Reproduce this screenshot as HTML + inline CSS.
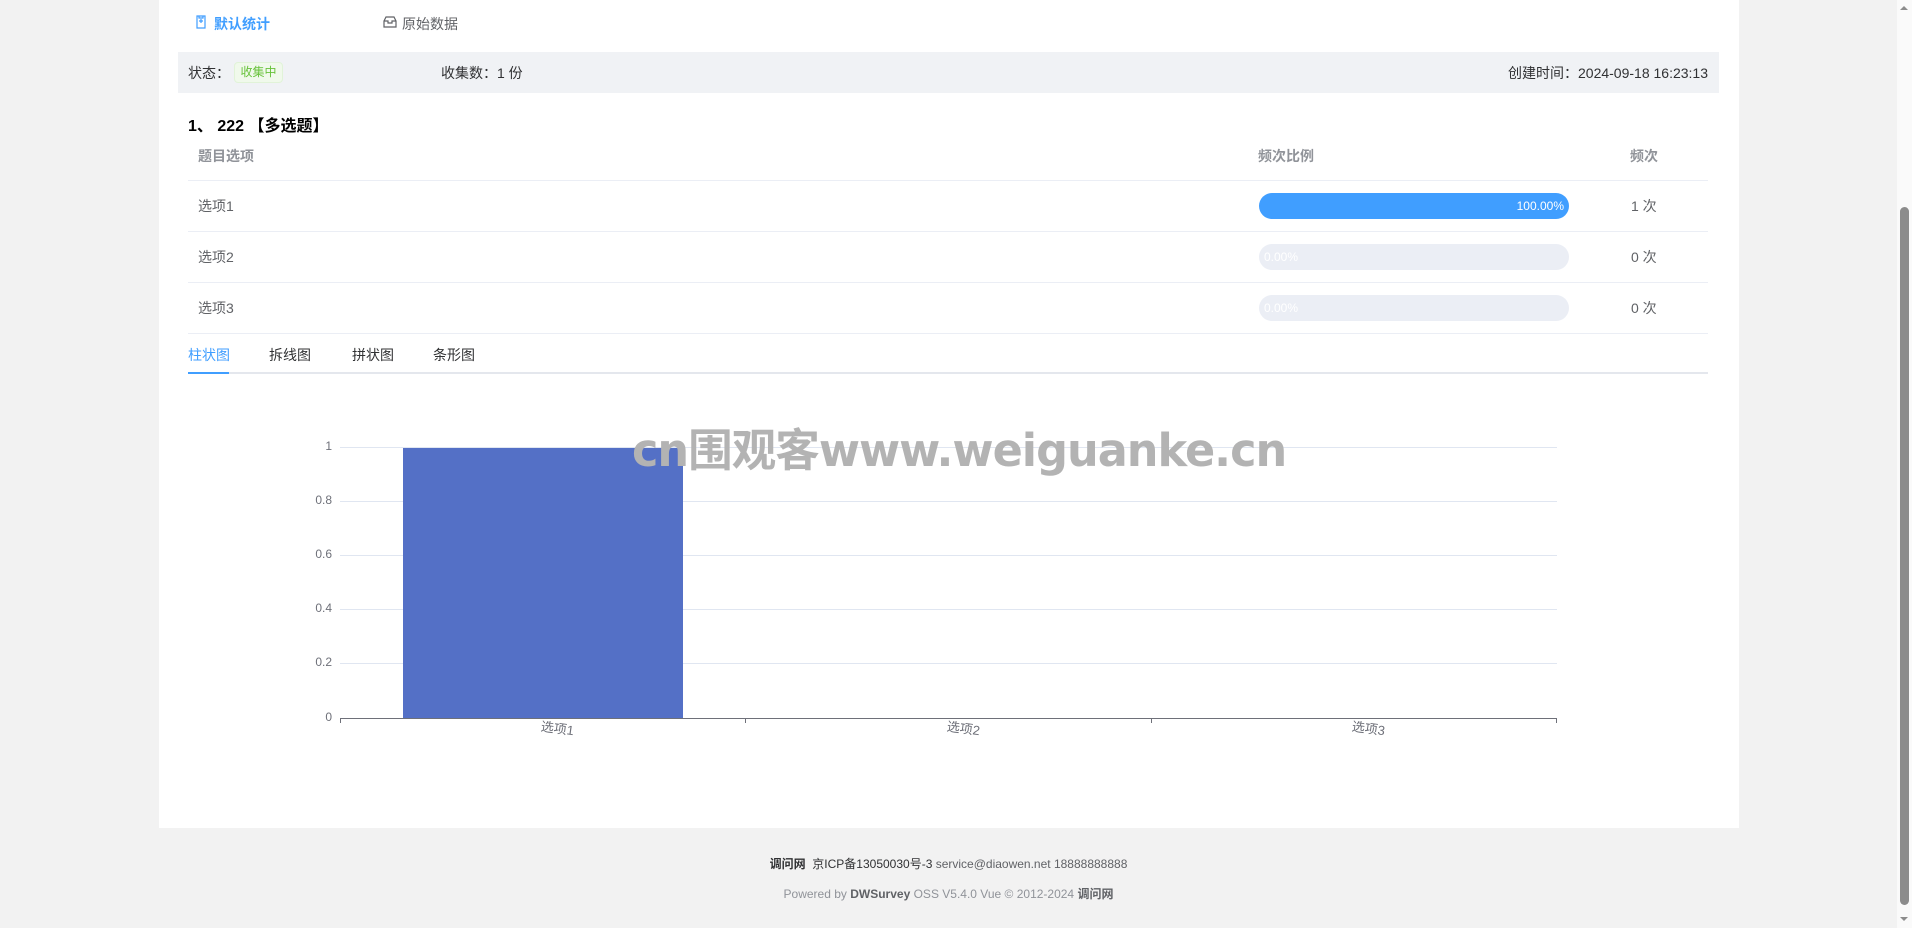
<!DOCTYPE html>
<html><head><meta charset="utf-8"><style>
*{margin:0;padding:0;box-sizing:border-box}
body{width:1912px;height:928px;overflow:hidden;background:#f2f2f2;font-family:"Liberation Sans","Noto Sans CJK SC",sans-serif;font-size:14px;color:#303133;position:relative}
.a{position:absolute;white-space:nowrap}
.card{position:absolute;left:159px;top:0;width:1580px;height:828px;background:#fff}
.line{position:absolute;left:188px;width:1520px;height:1px;background:#ebeef5}
.bar{position:absolute;left:1259px;width:310px;height:26px;border-radius:13px;background:#ebeef5;font-size:12px;color:#fff;line-height:26px}
.grid{position:absolute;left:340px;width:1217px;height:1px;background:#e0e6f1}
.yl{position:absolute;width:30px;left:302px;text-align:right;font-size:12px;color:#6e7079}
.xl{position:absolute;font-size:13px;color:#6e7079;transform:rotate(8deg)}
</style></head><body>
<div class="card"></div>
<svg class="a" style="left:195px;top:15px" width="12" height="14" viewBox="0 0 12 14"><path d="M2 1h8v12H2z M4 1v2h4V1 M4 6h4 M6 4v4" fill="none" stroke="#409eff" stroke-width="1.2"/></svg>
<div class="a" style="left:214px;top:14px;color:#409eff;font-weight:bold;font-size:14px">默认统计</div>
<svg class="a" style="left:383px;top:16px" width="14" height="12" viewBox="0 0 14 12"><path d="M1 5l2-4h8l2 4v6H1z M1 5h4v2h4V5h4" fill="none" stroke="#606266" stroke-width="1.2"/></svg>
<div class="a" style="left:402px;top:14px;color:#606266">原始数据</div>
<div class="a" style="left:178px;top:52px;width:1541px;height:41px;background:#f0f2f5"></div>
<div class="a" style="left:188px;top:63px">状态：</div>
<div class="a" style="left:234px;top:62px;width:49px;height:21px;background:#f0f9eb;border:1px solid #e1f3d8;border-radius:4px;color:#67c23a;font-size:12px;line-height:19px;text-align:center">收集中</div>
<div class="a" style="left:441px;top:63px">收集数：1 份</div>
<div class="a" style="right:204px;top:63px">创建时间：2024-09-18 16:23:13</div>
<div class="a" style="left:188px;top:112px;font-weight:bold;font-size:16px;color:#000">1、 222 【多选题】</div>
<div class="a" style="left:198px;top:146px;color:#909399;font-weight:bold;font-size:14px">题目选项</div>
<div class="a" style="left:1258px;top:146px;color:#909399;font-weight:bold">频次比例</div>
<div class="a" style="left:1630px;top:146px;color:#909399;font-weight:bold">频次</div>
<div class="line" style="top:180px"></div>
<div class="line" style="top:231px"></div>
<div class="line" style="top:282px"></div>
<div class="line" style="top:333px"></div>
<div class="a" style="left:198px;top:196px;color:#606266">选项1</div>
<div class="a" style="left:198px;top:247px;color:#606266">选项2</div>
<div class="a" style="left:198px;top:298px;color:#606266">选项3</div>
<div class="bar" style="top:193px;background:#409eff;text-align:right;padding-right:5px">100.00%</div>
<div class="bar" style="top:244px;padding-left:5px">0.00%</div>
<div class="bar" style="top:295px;padding-left:5px">0.00%</div>
<div class="a" style="left:1631px;top:196px;color:#606266">1 次</div>
<div class="a" style="left:1631px;top:247px;color:#606266">0 次</div>
<div class="a" style="left:1631px;top:298px;color:#606266">0 次</div>
<div class="a" style="left:188px;top:372px;width:1520px;height:2px;background:#e4e7ed"></div>
<div class="a" style="left:188px;top:372px;width:41px;height:2px;background:#409eff"></div>
<div class="a" style="left:188px;top:345px;color:#409eff">柱状图</div>
<div class="a" style="left:269px;top:345px">拆线图</div>
<div class="a" style="left:352px;top:345px">拼状图</div>
<div class="a" style="left:433px;top:345px">条形图</div>
<div class="grid" style="top:447px"></div>
<div class="grid" style="top:501px"></div>
<div class="grid" style="top:555px"></div>
<div class="grid" style="top:609px"></div>
<div class="grid" style="top:663px"></div>
<div class="yl" style="top:439px">1</div>
<div class="yl" style="top:493px">0.8</div>
<div class="yl" style="top:547px">0.6</div>
<div class="yl" style="top:601px">0.4</div>
<div class="yl" style="top:655px">0.2</div>
<div class="yl" style="top:710px">0</div>
<div class="a" style="left:403px;top:448px;width:280px;height:270px;background:#5470c6"></div>
<div class="a" style="left:340px;top:718px;width:1217px;height:1px;background:#6e7079"></div>
<div class="a" style="left:340px;top:718px;width:1px;height:5px;background:#6e7079"></div>
<div class="a" style="left:745px;top:718px;width:1px;height:5px;background:#6e7079"></div>
<div class="a" style="left:1151px;top:718px;width:1px;height:5px;background:#6e7079"></div>
<div class="a" style="left:1556px;top:718px;width:1px;height:5px;background:#6e7079"></div>
<div class="xl" style="left:541px;top:718px">选项1</div>
<div class="xl" style="left:947px;top:718px">选项2</div>
<div class="xl" style="left:1352px;top:718px">选项3</div>
<div class="a" style="left:632px;top:414px;font-size:45px;font-weight:bold;color:#b3b3b3;letter-spacing:-1px;font-family:'DejaVu Sans','Noto Sans CJK SC',sans-serif;transform:scaleX(0.99);transform-origin:left">cn围观客www.weiguanke.cn</div>
<div class="a" style="left:0;width:1897px;top:855px;text-align:center;font-size:12px;color:#606266"><b style="color:#303133">调问网</b>&nbsp; <span style="color:#303133">京ICP备13050030号-3</span> service@diaowen.net 18888888888</div>
<div class="a" style="left:0;width:1897px;top:885px;text-align:center;font-size:12px;color:#909399">Powered by <b style="color:#606266">DWSurvey</b> OSS V5.4.0 Vue © 2012-2024 <b style="color:#606266">调问网</b></div>
<div class="a" style="left:1897px;top:0;width:15px;height:928px;background:#fafafa"></div>
<div class="a" style="left:1900px;top:207px;width:9px;height:698px;background:#8c8c8c;border-radius:5px"></div>
<div class="a" style="left:1900px;top:6px;width:0;height:0;border-left:4px solid transparent;border-right:4px solid transparent;border-bottom:4px solid #8c8c8c"></div>
<div class="a" style="left:1900px;top:917px;width:0;height:0;border-left:4px solid transparent;border-right:4px solid transparent;border-top:4px solid #8c8c8c"></div>
</body></html>
